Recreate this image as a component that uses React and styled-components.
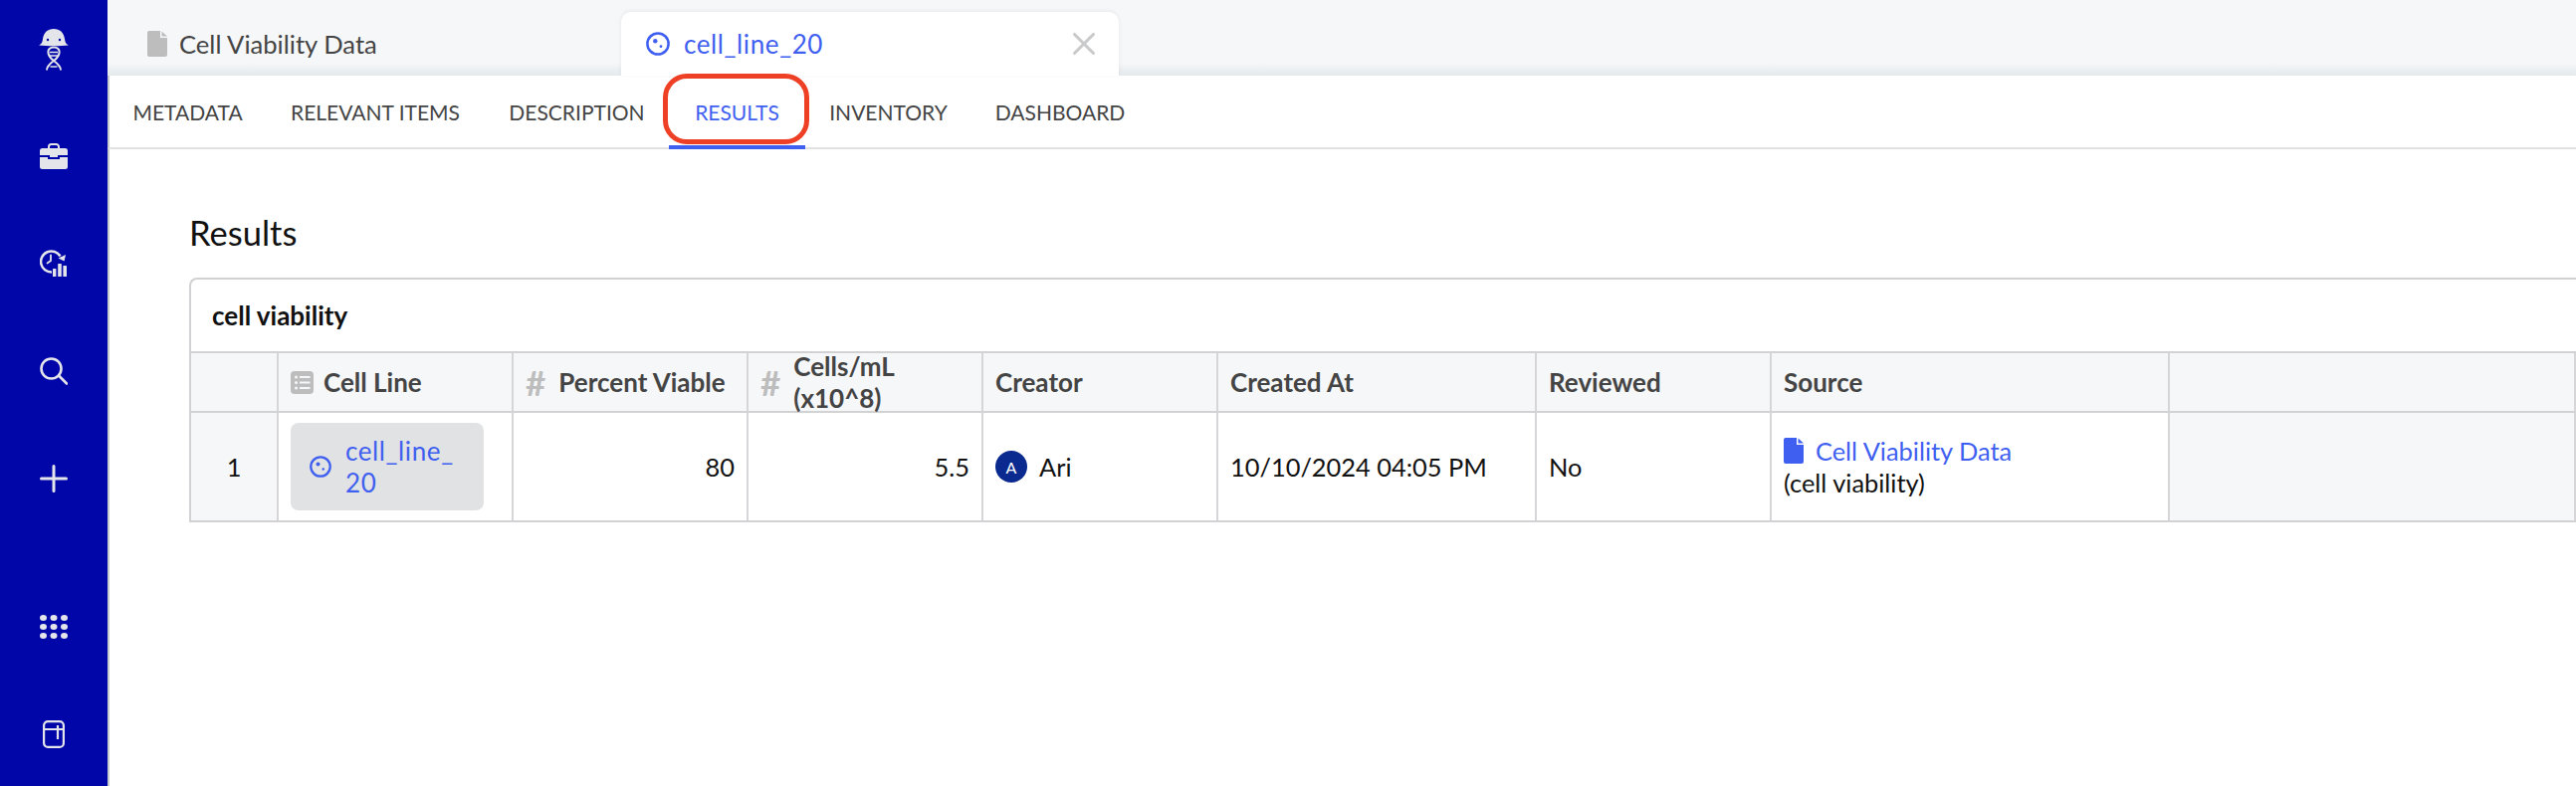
import React from 'react'
import styled, { createGlobalStyle } from 'styled-components'
import { FiX } from 'react-icons/fi'

const GlobalStyle = createGlobalStyle`
  html, body {
    margin: 0;
    padding: 0;
    background: #fff;
    font-family: Lato, "Open Sans", sans-serif;
    overflow: hidden;
  }
  * { box-sizing: border-box; }
`

const Page = styled.div`
  display: flex;
  width: 2588px;
  height: 790px;
  overflow: hidden;
`

const Sidebar = styled.aside`
  width: 108px;
  flex: none;
  background: #0006a8;
  display: flex;
  flex-direction: column;
  color: #e4e5ea;
`

const SideItem = styled.div`
  height: ${({ $h }) => $h || 108}px;
  margin-bottom: ${({ $mb }) => $mb || 0}px;
  display: flex;
  align-items: center;
  justify-content: center;
`

const SideBottom = styled.div`
  margin-top: auto;
  display: flex;
  flex-direction: column;
  gap: 4px;
`

const Main = styled.main`
  flex: 1;
  min-width: 0;
  display: flex;
  flex-direction: column;
`

const TabBar = styled.div`
  height: 76px;
  flex: none;
  display: flex;
  align-items: flex-end;
  background: linear-gradient(#f6f7f9 0, #f6f7f9 63px, #e3e9ec 76px);
  padding-left: 40px;
`

const Tab = styled.div`
  display: flex;
  align-items: center;
  height: 64px;
  width: 476px;
  gap: 12px;
  font-size: 25.6px;
  color: #444;
`

const ActiveTab = styled(Tab)`
  width: 500px;
  background: #fff;
  border-radius: 10px 10px 0 0;
  padding: 0 16px 0 25px;
  gap: 14px;
  font-size: 26px;
  letter-spacing: 0.6px;
  color: #3f5ff0;
  box-shadow: 0 -1px 4px rgba(60, 70, 90, 0.08);
`

const TabClose = styled.span`
  margin-left: auto;
  display: flex;
  color: #c9cacc;
`

const SubNav = styled.nav`
  height: 74px;
  flex: none;
  display: flex;
  border-bottom: 2px solid #e1e1e1;
  border-left: 2px solid #c6c8d0;
  position: relative;
`

const NavItem = styled.div`
  height: 74px;
  width: ${({ $w }) => $w}px;
  padding-top: 2px;
  display: flex;
  align-items: center;
  justify-content: center;
  font-size: 21px;
  text-transform: uppercase;
  color: ${({ $active }) => ($active ? '#3f5ff0' : '#444')};
  border-bottom: 4px solid ${({ $active }) => ($active ? '#3f5ff0' : 'transparent')};
`

const Callout = styled.div`
  position: absolute;
  left: 556px;
  top: -2px;
  width: 147px;
  height: 71px;
  border: 5px solid #ee4025;
  border-radius: 24px;
`

const Content = styled.section`
  flex: 1;
  border-left: 2px solid #c6c8d0;
  padding: 62px 0 0 80px;
`

const Heading = styled.h2`
  margin: 0 0 23px;
  height: 44px;
  line-height: 44px;
  font-size: 34.5px;
  font-weight: 400;
  color: #111;
`

const TableTitle = styled.div`
  height: 74px;
  border: 2px solid #d2d2d4;
  border-right: none;
  border-bottom: none;
  border-top-left-radius: 8px;
  display: flex;
  align-items: center;
  padding-left: 21px;
  font-size: 26px;
  font-weight: 700;
  color: #111;
`

const Grid = styled.div`
  display: grid;
  grid-template-columns: 88px 236px 236px 236px 236px 320px 236px 400px 1fr;
  grid-template-rows: 60px 108px;
  border-top: 2px solid #d2d2d4;
  border-left: 2px solid #d2d2d4;
  border-bottom: 2px solid #d2d2d4;
`

const HeadCell = styled.div`
  background: #f6f7f9;
  border-right: 2px solid #d6d6d8;
  border-bottom: 2px solid #d2d2d4;
  display: flex;
  align-items: center;
  gap: ${({ $gap }) => $gap || 10}px;
  padding: 0 12px;
  font-size: 26px;
  line-height: 32px;
  font-weight: 700;
  color: #444;
`

const Cell = styled.div`
  background: ${({ $muted }) => ($muted ? '#f6f7f9' : '#fff')};
  border-right: 2px solid #d6d6d8;
  display: flex;
  align-items: center;
  justify-content: ${({ $align }) => $align || 'flex-start'};
  padding: 0 12px;
  font-size: 25.4px;
  color: #111;
`

const EntityChip = styled.div`
  width: 194px;
  height: 88px;
  background: #e1e2e4;
  border-radius: 8px;
  display: flex;
  align-items: center;
  gap: 14px;
  padding: 0 19px;
  color: #3f5ff0;
  font-size: 26px;
  letter-spacing: 0.6px;
  line-height: 32px;
`

const Avatar = styled.span`
  width: 32px;
  height: 32px;
  border-radius: 50%;
  background: #0a2a8f;
  color: #fff;
  font-size: 16px;
  display: flex;
  align-items: center;
  justify-content: center;
  margin-right: 12px;
`

const SourceBlock = styled.div`
  line-height: 32px;
`

const SourceLink = styled.div`
  display: flex;
  align-items: center;
  gap: 12px;
  color: #3f5ff0;
`

const HashMark = styled.span`
  font-size: 35px;
  font-weight: 700;
  color: #bdbdbd;
  line-height: 1;
`

const CellIcon = ({ size = 24 }) => (
  <svg width={size} height={size} viewBox="0 0 24 24" fill="none" stroke="currentColor" strokeWidth="2.5" style={{ flex: 'none' }}>
    <circle cx="12" cy="12" r="10.6" />
    <circle cx="9.3" cy="9.3" r="2.2" fill="currentColor" stroke="none" />
    <circle cx="15" cy="14.7" r="1.4" fill="currentColor" stroke="none" />
  </svg>
)

const FileIcon = ({ color = 'currentColor' }) => (
  <svg width="20" height="26" viewBox="0 0 20 26" style={{ flex: 'none' }}>
    <path d="M2 0h11v7h7v17a2 2 0 0 1-2 2H2a2 2 0 0 1-2-2V2a2 2 0 0 1 2-2z M14.500 0.500l5.500 5h-5.500z" fill={color} />
  </svg>
)

const ListIcon = () => (
  <svg width="23" height="23" viewBox="0 0 23 23" style={{ flex: 'none' }}>
    <rect width="23" height="23" rx="4" fill="#bdbdbd" />
    <g fill="#f6f7f9">
      <circle cx="5.500" cy="6" r="1.500" />
      <circle cx="5.500" cy="11.500" r="1.500" />
      <circle cx="5.500" cy="17" r="1.500" />
      <rect x="9" y="5" width="10.500" height="2" />
      <rect x="9" y="10.500" width="10.500" height="2" />
      <rect x="9" y="16" width="10.500" height="2" />
    </g>
  </svg>
)

const LogoIcon = () => (
  <svg width="30" height="42" viewBox="0 0 30 42" fill="none" stroke="#e4e5ea" style={{ marginTop: 3 }}>
    <path d="M0 16.500c3-1.500 3.500-3 4-6.500C5 3.500 9 0 15 0s10 3.500 11 10c.5 3.500 1 5 4 6.500-8 1-22 1-30 0z" fill="#e4e5ea" stroke="none" />
    <circle cx="9" cy="11" r="1.200" fill="#0006a8" stroke="none" />
    <circle cx="21" cy="11" r="1.200" fill="#0006a8" stroke="none" />
    <path d="M15 18.500C23 18.500 22 27 15 32 11 35 8 38 8 41.500M15 18.500C7 18.500 8 27 15 32 19 35 22 38 22 41.500" strokeWidth="2" />
    <path d="M11 23.500h8M11 27h8M11.500 38h7" strokeWidth="1.700" />
  </svg>
)

const BriefcaseIcon = () => (
  <svg width="28" height="26" viewBox="0 0 28 26" fill="#e4e5ea">
    <path d="M9 5V3.500A2.500 2.500 0 0 1 11.500 1h5A2.500 2.500 0 0 1 19 3.500V5" fill="none" stroke="#e4e5ea" strokeWidth="2" />
    <path d="M2.500 5h23A2.500 2.500 0 0 1 28 7.500V12H18v2h-8v-2H0V7.500A2.500 2.500 0 0 1 2.500 5z" />
    <path d="M0 14h8v2h12v-2h8v9.500a2.500 2.500 0 0 1-2.500 2.500h-23A2.500 2.500 0 0 1 0 23.500z" />
  </svg>
)

const HistoryChartIcon = () => (
  <svg width="28" height="28" viewBox="0 0 28 28" fill="none" stroke="#e4e5ea" strokeWidth="2.500">
    <path d="M12 22.500A10.500 10.500 0 1 1 20.500 6.500" />
    <path d="M26 5l-1.500 6.500-6-3z" fill="#e4e5ea" stroke="none" />
    <path d="M11 5.500V11l-3.500 2.500" strokeWidth="1.800" strokeLinecap="round" />
    <g fill="#e4e5ea" stroke="none">
      <rect x="13" y="19" width="3.400" height="8" rx="0.500" />
      <rect x="18.200" y="14" width="3.600" height="13" rx="0.500" />
      <rect x="23.400" y="16" width="3.600" height="11" rx="0.500" />
    </g>
  </svg>
)

const SearchIcon = () => (
  <svg width="28" height="28" viewBox="0 0 28 28" fill="none" stroke="#e4e5ea" strokeWidth="2.600" strokeLinecap="round">
    <circle cx="11.500" cy="11.500" r="10" />
    <path d="M19 18.500l8 8" />
  </svg>
)

const PlusIcon = () => (
  <svg width="28" height="28" viewBox="0 0 28 28" stroke="#e4e5ea" strokeWidth="3" strokeLinecap="round">
    <path d="M14 1.500v25M1.500 14h25" />
  </svg>
)

const DotsIcon = () => (
  <svg width="28" height="26" viewBox="0 0 28 26" fill="#e4e5ea">
    {[4, 13, 22].map(y =>
      [3.5, 14, 24.5].map(x => <ellipse key={`${x}-${y}`} cx={x} cy={y} rx="3.500" ry="3" />)
    )}
  </svg>
)

const NotebookIcon = () => (
  <svg width="22" height="28" viewBox="0 0 22 28" fill="none" stroke="#e4e5ea" strokeWidth="2.200" strokeLinejoin="round">
    <rect x="1.100" y="1.100" width="19.800" height="25.800" rx="4" />
    <path d="M1 9h20M15 5v14" />
  </svg>
)

const tabs = [
  { label: 'Metadata', width: 157 },
  { label: 'Relevant Items', width: 220 },
  { label: 'Description', width: 185 },
  { label: 'Results', width: 137 },
  { label: 'Inventory', width: 167 },
  { label: 'Dashboard', width: 178 },
]

const App = () => (
  <Page>
    <GlobalStyle />
    <Sidebar>
      <SideItem $h={96} $mb={7}><LogoIcon /></SideItem>
      <SideItem><BriefcaseIcon /></SideItem>
      <SideItem><HistoryChartIcon /></SideItem>
      <SideItem><SearchIcon /></SideItem>
      <SideItem><PlusIcon /></SideItem>
      <SideBottom>
        <SideItem $h={104}><DotsIcon /></SideItem>
        <SideItem $h={104}><NotebookIcon /></SideItem>
      </SideBottom>
    </Sidebar>
    <Main>
      <TabBar>
        <Tab>
          <FileIcon color="#bdbdbd" />
          Cell Viability Data
        </Tab>
        <ActiveTab>
          <CellIcon />
          cell_line_20
          <TabClose><FiX size={38} /></TabClose>
        </ActiveTab>
      </TabBar>
      <SubNav>
        {tabs.map(t => (
          <NavItem key={t.label} $w={t.width} $active={t.label === 'Results'}>{t.label}</NavItem>
        ))}
        <Callout />
      </SubNav>
      <Content>
        <Heading>Results</Heading>
        <TableTitle>cell viability</TableTitle>
        <Grid>
          <HeadCell />
          <HeadCell><ListIcon />Cell Line</HeadCell>
          <HeadCell $gap={13}><HashMark>#</HashMark>Percent Viable</HeadCell>
          <HeadCell $gap={13}><HashMark>#</HashMark><span>Cells/mL<br />(x10^8)</span></HeadCell>
          <HeadCell>Creator</HeadCell>
          <HeadCell>Created At</HeadCell>
          <HeadCell>Reviewed</HeadCell>
          <HeadCell>Source</HeadCell>
          <HeadCell />

          <Cell $muted $align="center">1</Cell>
          <Cell>
            <EntityChip>
              <CellIcon size={22} />
              <span>cell_line_<br />20</span>
            </EntityChip>
          </Cell>
          <Cell $align="flex-end">80</Cell>
          <Cell $align="flex-end">5.5</Cell>
          <Cell><Avatar>A</Avatar>Ari</Cell>
          <Cell>10/10/2024 04:05 PM</Cell>
          <Cell>No</Cell>
          <Cell>
            <SourceBlock>
              <SourceLink><FileIcon />Cell Viability Data</SourceLink>
              (cell viability)
            </SourceBlock>
          </Cell>
          <Cell $muted />
        </Grid>
      </Content>
    </Main>
  </Page>
)

export default App
